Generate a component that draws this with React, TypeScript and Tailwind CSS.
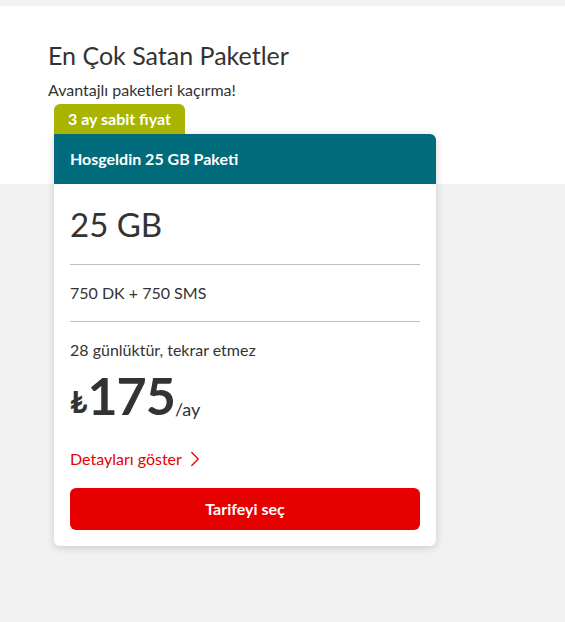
import { ChevronRight } from 'lucide-react';

const font = { fontFamily: '"Lato", "Noto Sans", sans-serif' };

export default function App() {
  return (
    <div className="min-h-[622px] w-full bg-[#f2f2f2] pt-[6px] text-[#333]" style={font}>
      <div className="h-[178px] bg-white" />
      <div className="-mt-[178px] px-[48px]">
        <h2 className="pt-[30px] text-[25px] leading-[38px] font-normal text-[#333]">En Çok Satan Paketler</h2>
        <p className="mt-[6px] text-[16px] leading-[20px] text-[#333]">Avantajlı paketleri kaçırma!</p>

        <div className="mt-[4px] ml-[6px] w-[382px]">
          <div className="inline-flex h-[30px] items-center rounded-t-[6px] bg-[#a8b400] px-[14px] text-[16px] font-bold text-white">
            3 ay sabit fiyat
          </div>
          <div className="overflow-hidden rounded-b-[6px] rounded-tr-[6px] bg-white shadow-[0_2px_8px_rgba(0,0,0,0.16)]">
            <div className="flex h-[50px] items-center bg-[#006b7b] px-[16px] text-[16px] font-bold text-white">
              Hosgeldin 25 GB Paketi
            </div>
            <div className="px-[16px] pb-[16px]">
              <div className="pt-[20px] pb-[20px] text-[33px] leading-[40px] text-[#333]">25 GB</div>
              <div className="border-t border-[#bebebe]" />
              <div className="py-[18px] text-[16px] leading-[20px]">750 DK + 750 SMS</div>
              <div className="border-t border-[#bebebe]" />
              <div className="pt-[18px] text-[16px] leading-[20px]">28 günlüktür, tekrar etmez</div>
              <div className="mt-[8px] flex items-end">
                <span className="mb-[6px] text-[30px] font-bold leading-none">₺</span>
                <span className="text-[52px] font-bold leading-[54px] tracking-[-1px]">175</span>
                <span className="mb-[4px] text-[18px] leading-none">/ay</span>
              </div>
              <div className="mt-[24px] flex items-center text-[16px] text-[#e60000]">
                Detayları göster
                <ChevronRight className="h-[26px] w-[26px]" strokeWidth={1.2} />
              </div>
              <button className="mt-[16px] flex h-[42px] w-full items-center justify-center rounded-[6px] bg-[#e60000] text-[16px] font-bold text-white">
                Tarifeyi seç
              </button>
            </div>
          </div>
        </div>
      </div>
    </div>
  );
}
